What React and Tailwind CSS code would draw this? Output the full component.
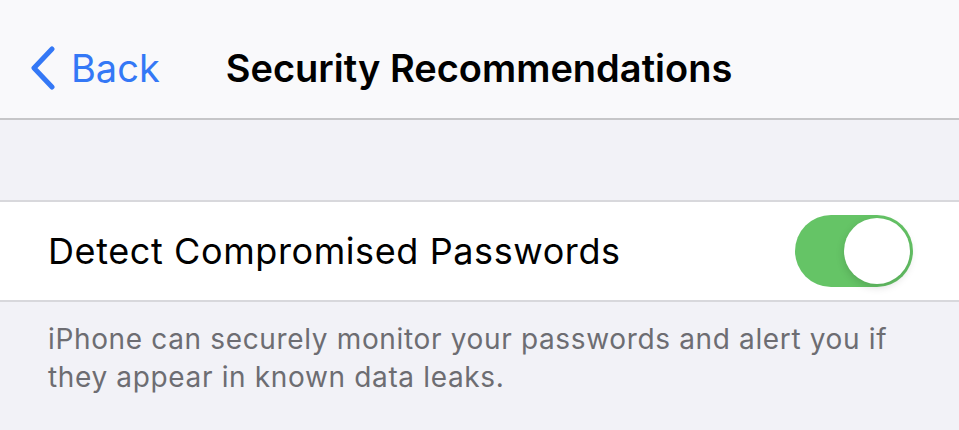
import React, { useState } from "react";

const font = { fontFamily: "Inter, 'Noto Sans', sans-serif" };

function Toggle({ on, onChange }) {
  return (
    <button
      onClick={() => onChange(!on)}
      className={`relative flex items-center w-[118px] h-[72px] rounded-full p-[3px] ${
        on ? "bg-[#65c466] justify-end" : "bg-[#e9e9eb] justify-start"
      }`}
    >
      <span className="block w-[66px] h-[66px] rounded-full bg-white shadow-[0_3px_8px_rgba(0,0,0,0.15)]" />
    </button>
  );
}

export default function App() {
  const [detect, setDetect] = useState(true);

  return (
    <div className="w-[959px] h-[430px] overflow-hidden bg-[#f2f2f7]" style={font}>
      <header className="flex items-center h-[120px] pt-[18px] bg-[#f9f9fb] border-b-[2px] border-[#c6c6c8]">
        <button className="flex items-center gap-[15px] pl-[30px] text-[#3478f6]">
          <svg width="26" height="44" viewBox="0 0 26 44" fill="none">
            <path
              d="M22 3L4 22L22 41"
              stroke="currentColor"
              strokeWidth="5"
              strokeLinecap="round"
              strokeLinejoin="round"
            />
          </svg>
          <span className="text-[38px] leading-none">Back</span>
        </button>
        <h1 className="ml-[66px] text-[38px] font-semibold leading-none text-black">
          Security Recommendations
        </h1>
      </header>

      <div className="h-[80px]" />

      <div className="flex items-center justify-between h-[102px] bg-white border-y-[2px] border-[#d8d8dc] pl-[48px] pr-[46px]">
        <span className="text-[36px] leading-none text-black tracking-[0.6px]">
          Detect Compromised Passwords
        </span>
        <Toggle on={detect} onChange={setDetect} />
      </div>

      <p className="pl-[48px] pr-[60px] pt-[18px] text-[28px] leading-[38px] text-[#6d6d72] tracking-[0.65px]">
        iPhone can securely monitor your passwords and alert you if they appear in known data leaks.
      </p>
    </div>
  );
}
